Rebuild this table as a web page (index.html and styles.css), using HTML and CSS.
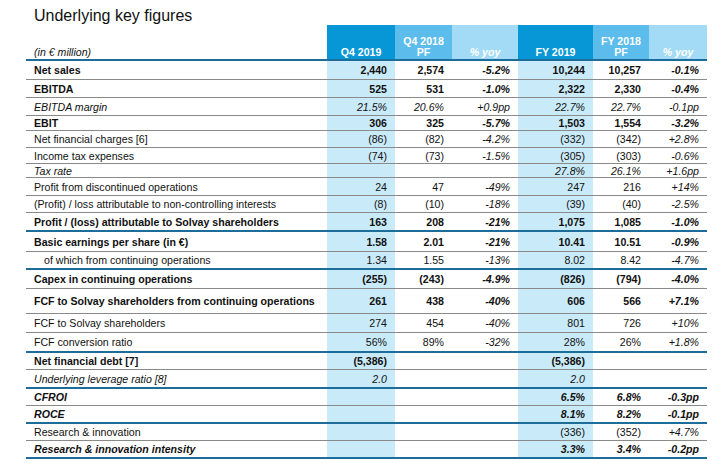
FILE: index.html
```html
<!DOCTYPE html>
<html lang="en">
<head>
<meta charset="utf-8">
<title>Underlying key figures</title>
<link rel="stylesheet" href="styles.css">
</head>
<body>
<div class="page">
  <h1 class="title">Underlying key figures</h1>
  <table class="kf">
    <colgroup>
      <col class="c-label"><col class="c-q4"><col class="c-q4pf"><col class="c-yoy1"><col class="c-fy"><col class="c-fypf"><col class="c-yoy2">
    </colgroup>
    <thead>
      <tr>
        <th class="unit">(in € million)</th>
        <th class="hd dark">Q4 2019</th>
        <th class="hd mid">Q4 2018<br>PF</th>
        <th class="hd light">% yoy</th>
        <th class="hd dark">FY 2019</th>
        <th class="hd mid">FY 2018<br>PF</th>
        <th class="hd light">% yoy</th>
      </tr>
    </thead>
    <tbody>
      <tr class="b r19"><td>Net sales</td><td class="hl">2,440</td><td>2,574</td><td class="y">-5.2%</td><td class="hl">10,244</td><td>10,257</td><td class="y">-0.1%</td></tr>
      <tr class="b r18"><td>EBITDA</td><td class="hl">525</td><td>531</td><td class="y">-1.0%</td><td class="hl">2,322</td><td>2,330</td><td class="y">-0.4%</td></tr>
      <tr class="i r18"><td>EBITDA margin</td><td class="hl">21.5%</td><td>20.6%</td><td class="y">+0.9pp</td><td class="hl">22.7%</td><td>22.7%</td><td class="y">-0.1pp</td></tr>
      <tr class="b r15"><td>EBIT</td><td class="hl">306</td><td>325</td><td class="y">-5.7%</td><td class="hl">1,503</td><td>1,554</td><td class="y">-3.2%</td></tr>
      <tr class="r17"><td>Net financial charges [6]</td><td class="hl">(86)</td><td>(82)</td><td class="y">-4.2%</td><td class="hl">(332)</td><td>(342)</td><td class="y">+2.8%</td></tr>
      <tr class="r16"><td>Income tax expenses</td><td class="hl">(74)</td><td>(73)</td><td class="y">-1.5%</td><td class="hl">(305)</td><td>(303)</td><td class="y">-0.6%</td></tr>
      <tr class="i r14"><td>Tax rate</td><td class="hl"></td><td></td><td class="y"></td><td class="hl">27.8%</td><td>26.1%</td><td class="y">+1.6pp</td></tr>
      <tr class="r18"><td>Profit from discontinued operations</td><td class="hl">24</td><td>47</td><td class="y">-49%</td><td class="hl">247</td><td>216</td><td class="y">+14%</td></tr>
      <tr class="r17"><td>(Profit) / loss attributable to non-controlling interests</td><td class="hl">(8)</td><td>(10)</td><td class="y">-18%</td><td class="hl">(39)</td><td>(40)</td><td class="y">-2.5%</td></tr>
      <tr class="b r19 thick"><td>Profit / (loss) attributable to Solvay shareholders</td><td class="hl">163</td><td>208</td><td class="y">-21%</td><td class="hl">1,075</td><td>1,085</td><td class="y">-1.0%</td></tr>
      <tr class="b r20"><td>Basic earnings per share (in €)</td><td class="hl">1.58</td><td>2.01</td><td class="y">-21%</td><td class="hl">10.41</td><td>10.51</td><td class="y">-0.9%</td></tr>
      <tr class="r18 thick"><td class="indent">of which from continuing operations</td><td class="hl">1.34</td><td>1.55</td><td class="y">-13%</td><td class="hl">8.02</td><td>8.42</td><td class="y">-4.7%</td></tr>
      <tr class="b r19"><td>Capex in continuing operations</td><td class="hl">(255)</td><td>(243)</td><td class="y">-4.9%</td><td class="hl">(826)</td><td>(794)</td><td class="y">-4.0%</td></tr>
      <tr class="b r25"><td>FCF to Solvay shareholders from continuing operations</td><td class="hl">261</td><td>438</td><td class="y">-40%</td><td class="hl">606</td><td>566</td><td class="y">+7.1%</td></tr>
      <tr class="r19"><td>FCF to Solvay shareholders</td><td class="hl">274</td><td>454</td><td class="y">-40%</td><td class="hl">801</td><td>726</td><td class="y">+10%</td></tr>
      <tr class="r20 thick"><td>FCF conversion ratio</td><td class="hl">56%</td><td>89%</td><td class="y">-32%</td><td class="hl">28%</td><td>26%</td><td class="y">+1.8%</td></tr>
      <tr class="b r17"><td>Net financial debt [7]</td><td class="hl">(5,386)</td><td></td><td class="y"></td><td class="hl">(5,386)</td><td></td><td class="y"></td></tr>
      <tr class="i r19 thick"><td>Underlying leverage ratio [8]</td><td class="hl">2.0</td><td></td><td class="y"></td><td class="hl">2.0</td><td></td><td class="y"></td></tr>
      <tr class="b i r17"><td>CFROI</td><td class="hl"></td><td></td><td class="y"></td><td class="hl">6.5%</td><td>6.8%</td><td class="y">-0.3pp</td></tr>
      <tr class="b i r18 thick"><td>ROCE</td><td class="hl"></td><td></td><td class="y"></td><td class="hl">8.1%</td><td>8.2%</td><td class="y">-0.1pp</td></tr>
      <tr class="r17"><td>Research &amp; innovation</td><td class="hl"></td><td></td><td class="y"></td><td class="hl">(336)</td><td>(352)</td><td class="y">+4.7%</td></tr>
      <tr class="b i r18 thick"><td>Research &amp; innovation intensity</td><td class="hl"></td><td></td><td class="y"></td><td class="hl">3.3%</td><td>3.4%</td><td class="y">-0.2pp</td></tr>
    </tbody>
  </table>
</div>
</body>
</html>
```

FILE: styles.css
```css
html, body {
  margin: 0;
  padding: 0;
  background: #ffffff;
}

body {
  font-family: "Liberation Sans", Arial, sans-serif;
  color: #111111;
}

.page {
  padding: 6px 0 0 26px;
  width: 681px;
}

.title {
  margin: 0 0 0 8px;
  font-size: 16px;
  font-weight: normal;
  line-height: 19px;
  color: #111111;
}

.kf {
  margin-top: 0;
  border-collapse: separate;
  border-spacing: 0;
  table-layout: fixed;
  width: 681px;
  font-size: 10.6px;
}

.c-label { width: 301px; }
.c-q4 { width: 68px; }
.c-q4pf { width: 57px; }
.c-yoy1 { width: 66px; }
.c-fy { width: 75px; }
.c-fypf { width: 56px; }
.c-yoy2 { width: 58px; }

.kf th {
  height: 36px;
  padding: 0 0 1px 0;
  vertical-align: bottom;
  font-size: 10.6px;
  line-height: 11px;
  font-weight: bold;
  color: #ffffff;
  text-align: center;
  border-bottom: 2px solid #1c6d99;
  box-sizing: border-box;
}

.kf th.unit {
  text-align: left;
  padding-left: 8px;
  font-weight: normal;
  font-style: italic;
  color: #111111;
}

.kf th.dark { background: #0897d6; }
.kf th.mid { background: #5cbdec; }
.kf th.light { background: #a3daf5; font-style: italic; }

.kf td {
  box-sizing: border-box;
  padding: 0 8px 0 0;
  text-align: right;
  vertical-align: middle;
  line-height: 12px;
  border-bottom: 1px solid #8a8a8a;
  white-space: nowrap;
}

.kf td:first-child {
  text-align: left;
  padding-left: 8px;
}

.kf td.indent { padding-left: 18px; }

.kf td.hl { background: #c9eaf9; }
.kf td.y { font-style: italic; }

.kf tr.b td { font-weight: bold; }
.kf tr.i td { font-style: italic; }

.kf tr.thick td { border-bottom: 2px solid #1c6d99; }

.kf tr.r14 td { height: 14px; }
.kf tr.r15 td { height: 15px; }
.kf tr.r16 td { height: 16px; }
.kf tr.r17 td { height: 17px; }
.kf tr.r18 td { height: 18px; }
.kf tr.r19 td { height: 19px; }
.kf tr.r20 td { height: 20px; }
.kf tr.r25 td { height: 25px; }
```
